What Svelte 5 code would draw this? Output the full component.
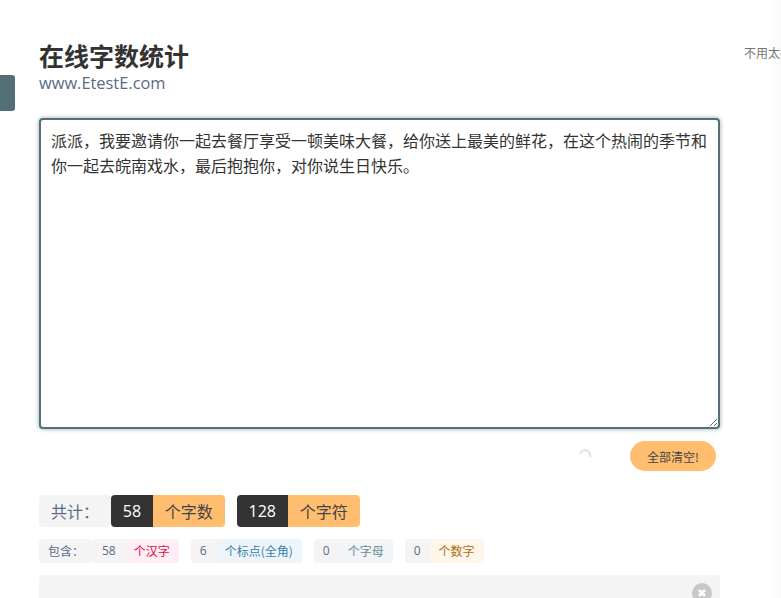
<script>
  const comma = "\uFF0C";
  const colon = "\uFF1A";
  const text = ["派派", "我要邀请你一起去餐厅享受一顿美味大餐", "给你送上最美的鲜花", "在这个热闹的季节和你一起去皖南戏水", "最后抱抱你", "对你说生日快乐。"].join(comma);
  const parts = [
    { n: 58, label: "个汉字", kind: "han" },
    { n: 6, label: "个标点(全角)", kind: "punct" },
    { n: 0, label: "个字母", kind: "letter" },
    { n: 0, label: "个数字", kind: "digit" }
  ];
</script>

<div class="page">
  <div class="tab"></div>
  <main>
    <h1>在线字数统计</h1>
    <div class="site">www.EtestE.com</div>
    <textarea value={text}></textarea>
    <div class="actions">
      <svg class="spin" width="14" height="14" viewBox="0 0 14 14"><path d="M2 5A5 5 0 0 1 12 8" fill="none" stroke="#e0e0e0" stroke-width="2"/></svg>
      <button>全部清空!</button>
    </div>
    <div class="totals">
      <span class="total-label">共计{colon}</span>
      <span class="pair"><b>58</b><i>个字数</i></span>
      <span class="pair"><b>128</b><i>个字符</i></span>
    </div>
    <div class="parts">
      <span class="part-label">包含{colon}</span>
      {#each parts as p}
        <span class="part {p.kind}"><b>{p.n}</b><i>{p.label}</i></span>
      {/each}
    </div>
    <div class="result">
      <span class="close">
        <svg width="10" height="10" viewBox="0 0 10 10"><path d="M2 2L8 8M8 2L2 8" stroke="#fff" stroke-width="2.6"/></svg>
      </span>
    </div>
  </main>
  <aside>不用太担心</aside>
</div>

<style>
  :global(body) {
    overflow: hidden;
    background: #fff;
  }
  .page {
    display: flex;
    height: 598px;
    overflow: hidden;
    padding: 39px 0 0 39px;
    box-sizing: border-box;
    font-family: "Noto Sans CJK SC", "Open Sans", sans-serif;
    color: #333;
    background: linear-gradient(to right, #fff 768px, #f9f9f9 781px);
  }
  .tab {
    position: absolute;
    left: 0;
    top: 75px;
    width: 15px;
    height: 36px;
    background: #546e75;
    border-radius: 0 3px 3px 0;
  }
  main {
    width: 681px;
    flex-shrink: 0;
  }
  aside {
    margin: 5px 0 0 24px;
    font-size: 12px;
    line-height: 18px;
    color: #777;
    white-space: nowrap;
  }
  h1 {
    margin: 0;
    font-size: 25px;
    line-height: 32px;
    font-weight: 700;
    color: #333;
  }
  .site {
    font-family: "Open Sans", sans-serif;
    font-size: 16.4px;
    line-height: 22px;
    margin-top: 1px;
    color: #5a6b85;
  }
  textarea {
    display: block;
    box-sizing: border-box;
    width: 681px;
    height: 311px;
    margin-top: 24px;
    padding: 8px 10px;
    border: 2px solid #527076;
    border-radius: 4px;
    box-shadow: 0 0 4px rgba(79, 106, 112, 0.6);
    outline: none;
    font-family: inherit;
    font-size: 16px;
    line-height: 25px;
    color: #333;
    background: #fff;
  }
  .actions {
    display: flex;
    justify-content: flex-end;
    align-items: center;
    height: 30px;
    margin-top: 12px;
    padding-right: 4px;
  }
  .spin {
    margin-right: 38px;
  }
  button {
    width: 86px;
    height: 30px;
    border: 0;
    border-radius: 15px;
    padding: 0;
    background: #ffbe6f;
    font-family: inherit;
    font-size: 12px;
    color: #444;
  }
  .totals {
    display: flex;
    margin-top: 24px;
    height: 32px;
    font-size: 16px;
    line-height: 32px;
  }
  .total-label {
    width: 72px;
    box-sizing: border-box;
    padding-left: 12px;
    background: #f4f4f5;
    border-radius: 4px;
    color: #5a6b85;
  }
  .pair {
    display: flex;
    border-radius: 4px;
    overflow: hidden;
    margin-right: 12px;
  }
  .pair b {
    font-family: "Open Sans", sans-serif;
    font-weight: 400;
    padding: 0 11.75px;
    background: #333;
    color: #fff;
  }
  .pair i {
    font-style: normal;
    padding: 0 12px;
    background: #ffbe6f;
    color: #444;
  }
  .parts {
    display: flex;
    margin-top: 12px;
    height: 24px;
    font-size: 12px;
    line-height: 24px;
  }
  .part-label {
    width: 54px;
    box-sizing: border-box;
    padding-left: 9px;
    background: #f4f4f5;
    border-radius: 4px;
    color: #5a6b85;
  }
  .part {
    display: flex;
    border-radius: 4px;
    overflow: hidden;
    margin-right: 12px;
  }
  .part b {
    font-family: "Open Sans", sans-serif;
    font-weight: 400;
    padding: 0 9px;
    background: #f4f4f5;
    color: #5a6b85;
  }
  .part i {
    font-style: normal;
    padding: 0 9px;
  }
  .han i { background: #ffeef3; color: #d6114a; }
  .punct i { background: #edf5fb; color: #3b80ae; }
  .letter i { background: #f1f5f7; color: #6b8a99; }
  .digit i { background: #fff6ea; color: #b06d0c; }
  .result {
    position: relative;
    height: 60px;
    margin-top: 12px;
    background: #f4f4f4;
    border-radius: 4px;
  }
  .close {
    position: absolute;
    top: 8px;
    right: 8px;
    width: 20px;
    height: 20px;
    border-radius: 50%;
    background: #c8c8c8;
    display: flex;
    align-items: center;
    justify-content: center;
  }
</style>
